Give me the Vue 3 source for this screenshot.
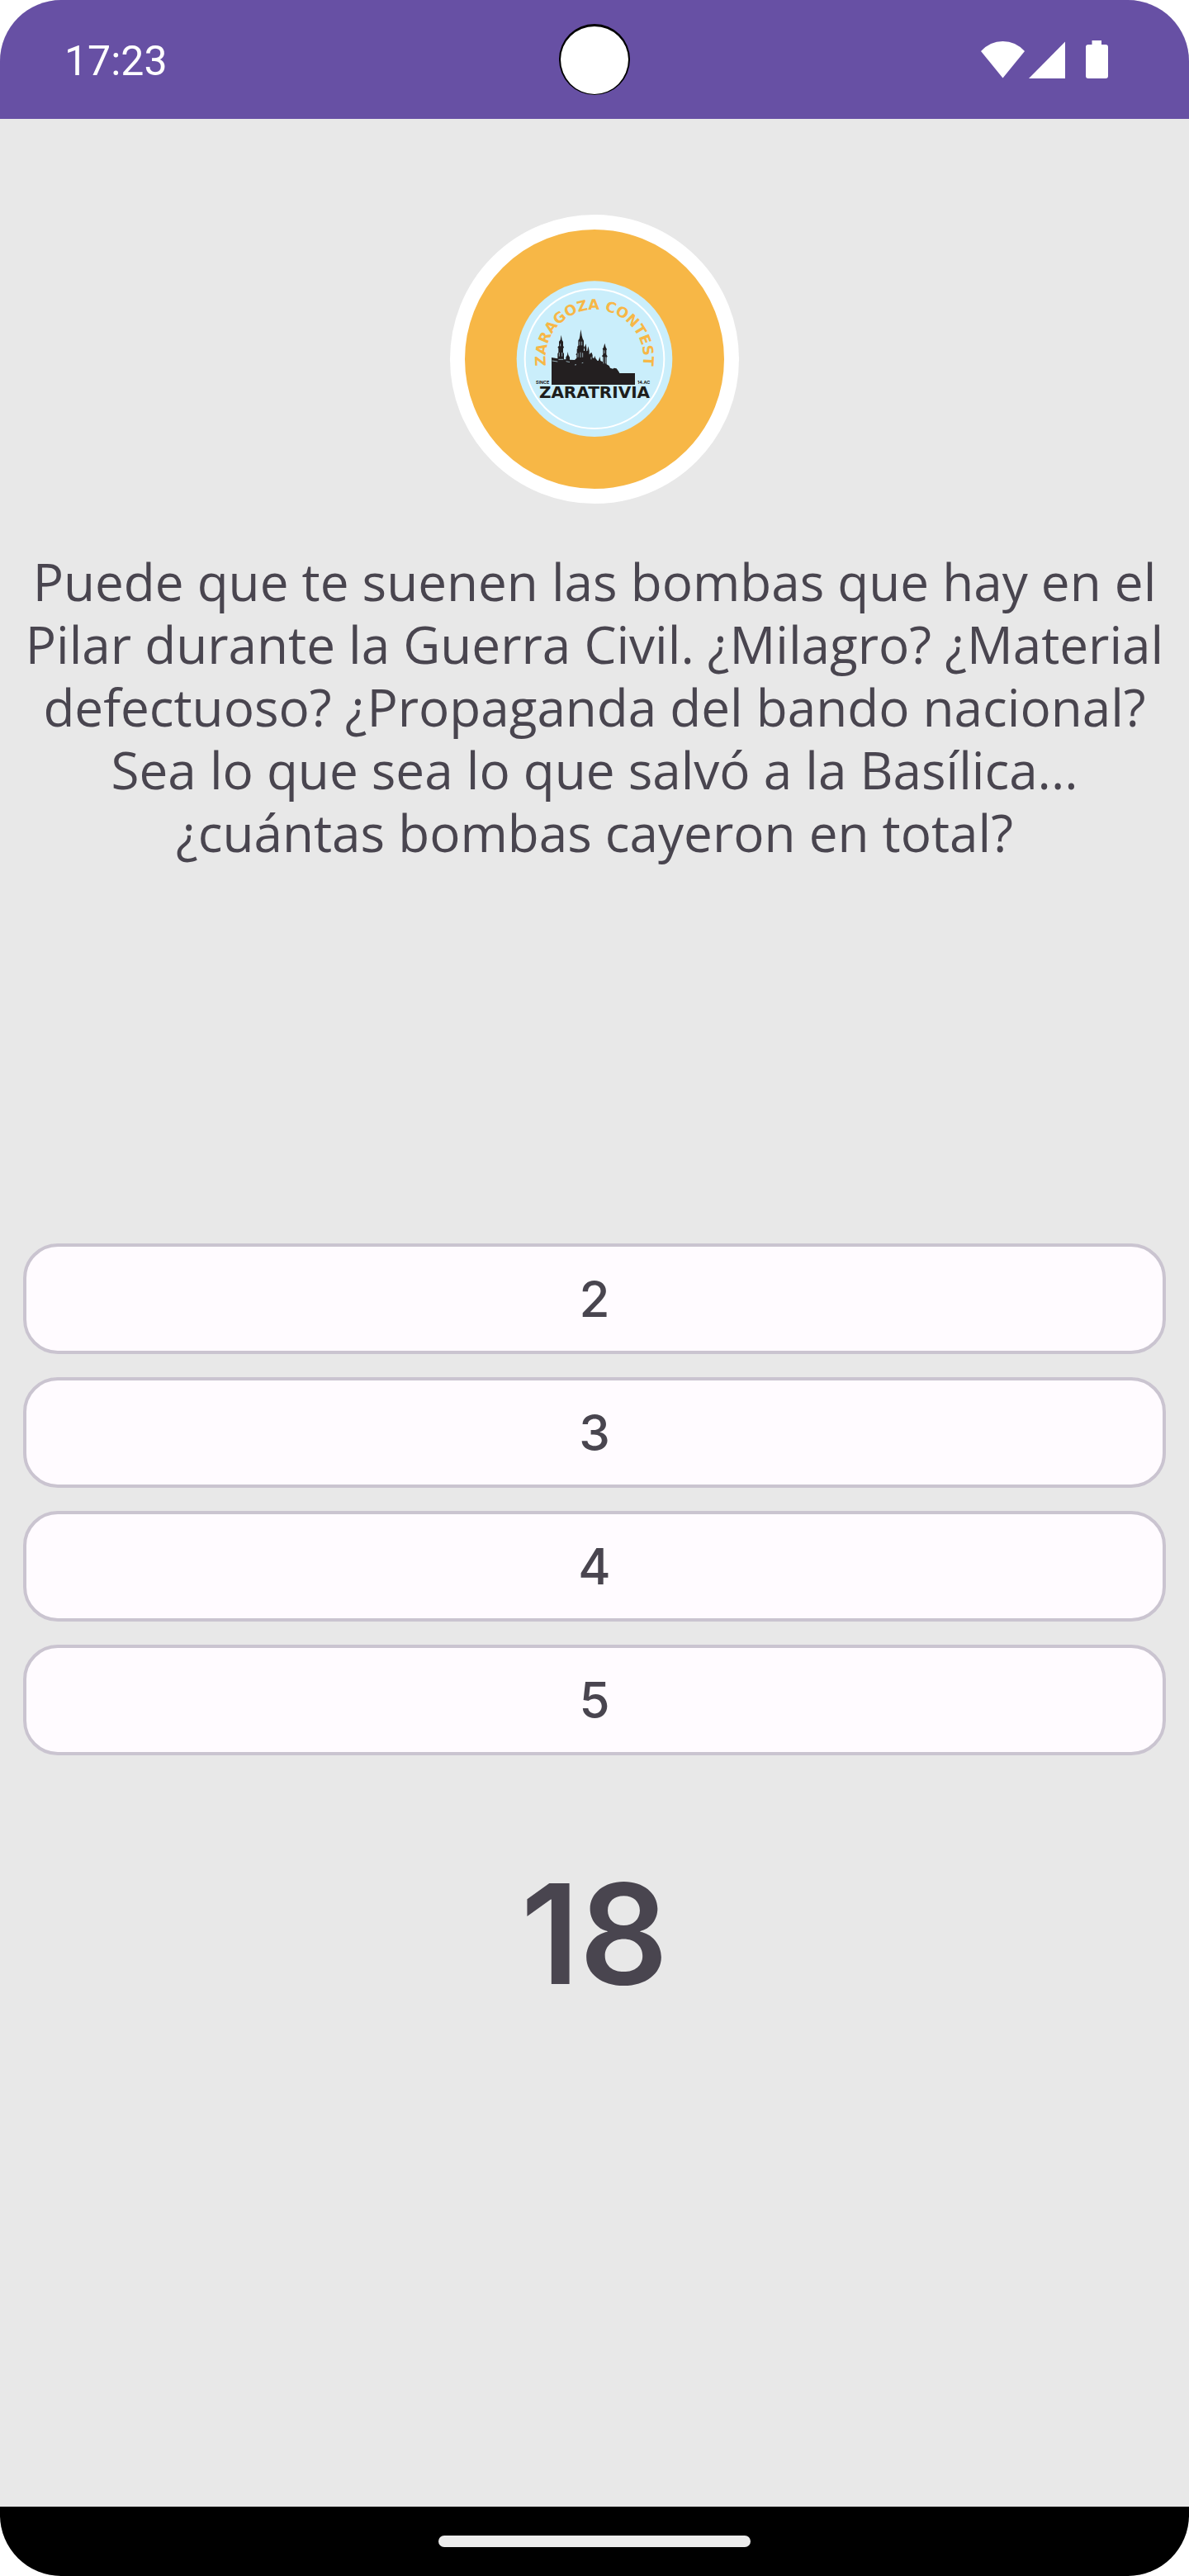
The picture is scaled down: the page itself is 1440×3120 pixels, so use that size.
<script setup>
import { ref } from 'vue'

const time = '17:23'
const lines = [
  'Puede que te suenen las bombas que hay en el',
  'Pilar durante la Guerra Civil. ¿Milagro? ¿Material',
  'defectuoso? ¿Propaganda del bando nacional?',
  'Sea lo que sea lo que salvó a la Basílica...',
  '¿cuántas bombas cayeron en total?',
]
const answers = ['2', '3', '4', '5']
const secondsLeft = ref(18)
const chosen = ref(null)
</script>

<template>
  <div class="phone">
    <header class="status-bar">
      <time class="clock">{{ time }}</time>
      <svg class="status-icons" viewBox="28 49 154 46" aria-hidden="true">
        <path d="M28 62Q39 50 54.5 50T81 62L54.5 94.5Z" />
        <path d="M86 95L130 50.500V95Z" />
        <path d="M162.500 49H174V54H179Q182 54 182 57V92Q182 95 179 95H158Q155 95 155 92V57Q155 54 158 54H162.500Z" />
      </svg>
      <span class="camera"></span>
    </header>

    <main class="quiz">
      <div class="badge">
        <svg class="logo" viewBox="0 0 660 660" role="img" aria-label="Zaratrivia">
          <defs>
            <path id="motto-arc" d="M161 384A178 178 0 1 1 499 384" />
          </defs>
          <circle cx="330" cy="329" r="283" fill="#caeefb" />
          <circle cx="330" cy="329" r="253" fill="none" stroke="#fff" stroke-width="6" />
          <text class="motto" text-anchor="middle">
            <textPath href="#motto-arc" startOffset="50%">ZARAGOZA CONTEST</textPath>
          </text>
          <path
            fill="#231f20"
            d="M174 423V324L196 328V310L199 305V290L196 287L201 281V266L206 260L209 242L212 260L216 267V281L219 287L216 291V305L219 310V331H226V323L231 315L233 303L235 315L240 323V332L258 333L265 326V316L262 313L266 308V293L269 290L267 286L271 281V262L275 256L277 245L280 222L284 245L287 256L291 263V281L294 288L291 294V300H294V288L298 274L301 288V301L304 300L307 283L311 300V313L315 309L319 305L323 315V325L328 327L331 318L334 327L341 336L345 335L349 321L352 336L360 340V322L357 319L361 313V296L359 293L363 287L367 272L371 287L375 294L373 298V313L377 320L374 324V349L383 354L387 362L397 365L401 362L410 364L418 375L421 381H477V423Z"
          />
          <path
            fill="none"
            stroke="#caeefb"
            stroke-width="2"
            d="M176 336L196 339M202 306V320M212 306V320M199 331H217M227 338L240 341M270 308V323M279 305V324M287 307V323M276 266V280M284 266V280M258 351L264 350M284 344L289 343M363 322V346M371 322V346M318 322V331M206 274V283M366 298V309"
          />
          <text class="small-print" x="117" y="419">SINCE</text>
          <text class="small-print" x="486" y="419">14.AC</text>
          <text class="name" x="330" y="470" text-anchor="middle">ZARATRIVIA</text>
        </svg>
      </div>

      <h1 class="question">
        <template v-for="(line, i) in lines" :key="i"><br v-if="i" />{{ line }}</template>
      </h1>

      <div class="answers">
        <button
          v-for="answer in answers"
          :key="answer"
          type="button"
          class="answer"
          :aria-pressed="chosen === answer"
          @click="chosen = answer"
        >
          {{ answer }}
        </button>
      </div>

      <p class="countdown">{{ secondsLeft }}</p>
    </main>

    <footer class="nav-bar"><span class="handle"></span></footer>
  </div>
</template>

<style>
body {
  margin: 0;
  background: #fff;
}
</style>

<style scoped>
.phone {
  display: flex;
  flex-direction: column;
  min-height: 100vh;
  overflow: hidden;
  border-radius: 74px;
  background: #e8e8e8;
  color: #49454f;
  font-family: "Open Sans", "Liberation Sans", sans-serif;
}

.status-bar {
  position: relative;
  display: flex;
  align-items: center;
  justify-content: space-between;
  height: 144px;
  padding: 0 98px 0 78px;
  box-sizing: border-box;
  background: #6750a4;
  color: #fff;
}

.clock {
  padding-top: 4px;
  font: 400 50px/60px Roboto, sans-serif;
}

.status-icons {
  width: 154px;
  height: 46px;
  fill: #fff;
}

.camera {
  position: absolute;
  top: 29px;
  left: 50%;
  width: 82px;
  height: 82px;
  margin-left: -43px;
  border: 2px solid #000;
  border-top-width: 3px;
  border-bottom-width: 1px;
  border-radius: 50%;
  background: #fff;
}

.quiz {
  display: flex;
  flex: 1;
  flex-direction: column;
  padding: 116px 28px 0;
}

.badge {
  display: flex;
  align-items: center;
  justify-content: center;
  align-self: center;
  width: 314px;
  height: 314px;
  border: 18px solid #fff;
  border-radius: 50%;
  background: #f7b746;
}

.logo {
  width: 220px;
  height: 220px;
}

.motto {
  fill: #f7b746;
  font: 700 52px "DejaVu Sans", sans-serif;
}

.small-print {
  fill: #1d1d1b;
  font: 700 16px Inter, sans-serif;
}

.name {
  fill: #1d1d1b;
  font: 700 60px "DejaVu Sans", sans-serif;
}

.question {
  min-height: 840px;
  margin: 56px 0 0;
  font-size: 62px;
  font-weight: 400;
  line-height: 76px;
  text-align: center;
  white-space: nowrap;
}

.answers {
  display: flex;
  flex-direction: column;
  gap: 28px;
}

.answer {
  height: 134px;
  border: 4px solid #cac4d0;
  border-radius: 42px;
  background: #fffbff;
  color: inherit;
  font: 500 60px/76px Inter, sans-serif;
}

.countdown {
  margin: 116px 0 0;
  font: 600 168px/200px Inter, sans-serif;
  text-align: center;
}

.nav-bar {
  display: flex;
  align-items: center;
  justify-content: center;
  height: 84px;
  background: #000;
}

.handle {
  width: 378px;
  height: 14px;
  border-radius: 7px;
  background: #ececec;
}
</style>
